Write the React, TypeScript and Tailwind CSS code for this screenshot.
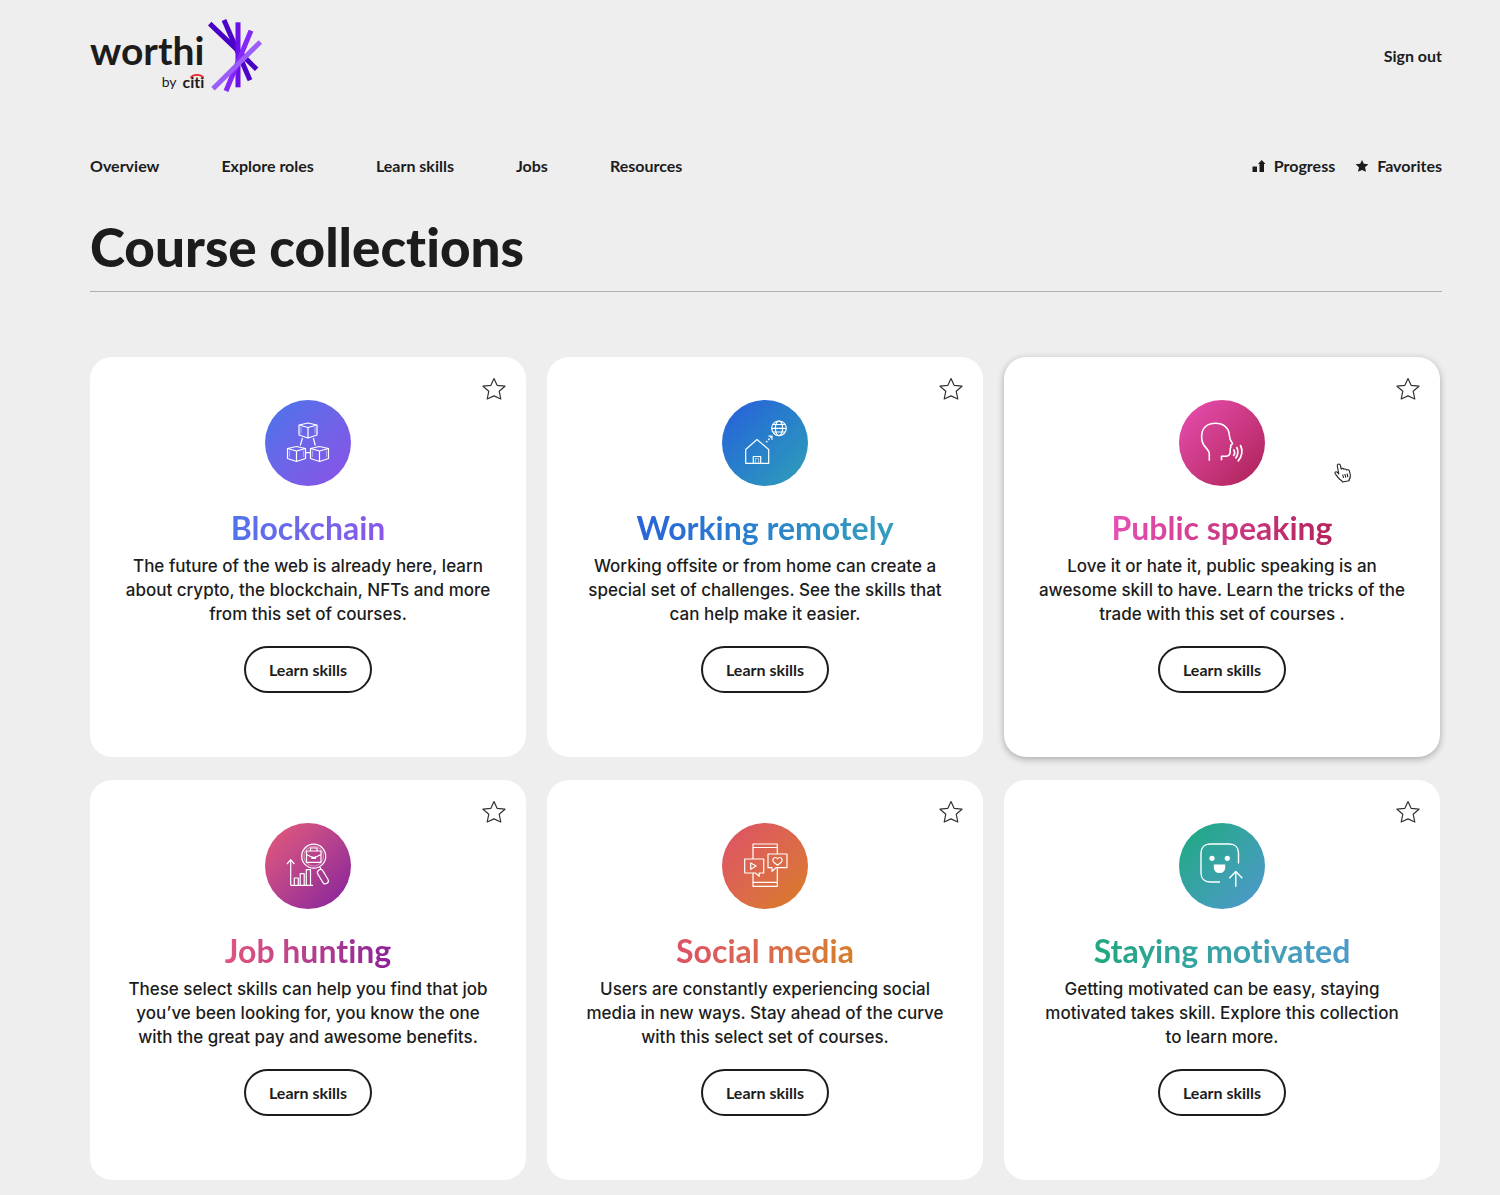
import type { ReactNode } from "react";
import clsx from "clsx";

type Collection = {
  title: string;
  text: string;
  disc: string;
  heading: string;
  icon: ReactNode;
  active?: boolean;
};

const navLinks = ["Overview", "Explore roles", "Learn skills", "Jobs", "Resources"];

const STAR = "M12 1.5 15.1 8.3 23 9.2 17.2 14.2 18.8 22 12 18.9 5.2 22 6.8 14.2 1 9.2 8.9 8.3Z";

function Cube({ x, y }: { x: number; y: number }) {
  return (
    <g transform={`translate(${x} ${y})`}>
      <path d="M0 2.5 9 0.5 18 2.5V12.5L9 15.5 0 12.5ZM0 2.5 9 5 18 2.5M9 5V15.5" />
      <path d="M2 4.5V11M16 4.5V11" strokeOpacity="0.4" />
    </g>
  );
}

const blockchainIcon = (
  <>
    <Cube x={34} y={22.5} />
    <Cube x={22.5} y={46} />
    <Cube x={45.5} y={46} />
    <path d="M37.5 38 35.3 45.5M48.3 38 50.3 45.5M40.7 52.7H45.3" />
  </>
);

const remoteIcon = (
  <>
    <path d="M23.7 63.3V49.5L35 39.5 46.7 49.5V63.3ZM31.3 63.3V56.5H38.7V63.3" />
    <path d="M33.5 63V58.5H36.5V63" strokeOpacity="0.5" />
    <path d="M44 42.3 49.5 36.5" strokeDasharray="2 1.2" />
    <path d="M46.5 36.2H50V39.8" />
    <circle cx="57" cy="28.3" r="7.3" />
    <ellipse cx="57" cy="28.3" rx="3.6" ry="7.3" />
    <path d="M49.7 28.3H64.3M51 24.5H63M51 32H63" />
  </>
);

const speakingIcon = (
  <>
    <path
      d="M30.3 60.7V54C30.3 50 27 48.5 24.8 45 22.8 41.5 22.3 38 22.8 34.5 23.5 27 29 23.2 36.5 23.2 44 23.2 50 27.5 50.3 35 50.4 39 51 40.5 53.5 43.5 53.3 45 51.6 45 51.6 45.6L51.8 47.5 51.2 48.5V52C51 55.5 49 56.3 46.5 56.3H42.5V60.3"
      strokeWidth="1.6"
    />
    <path d="M54.5 49.5C56 51.5 56 54 54.3 56M57.5 47C59.5 50 59.5 55 56.5 58.5M61.3 45C64 50 63.5 56.5 58.8 61.3" strokeWidth="1.7" />
  </>
);

const jobIcon = (
  <>
    <path d="M25.7 62.3V37M22 41 25.7 36.7 29.3 41M25.7 62.3H48" />
    <path d="M29.3 62V55H33.3V62M35.2 62V50.7H39.2V62M41.3 62V46.7H45.5V62" />
    <circle cx="48.7" cy="33.2" r="12" />
    <circle cx="48.7" cy="33.2" r="9.8" strokeOpacity="0.4" />
    <path d="M41.5 28H56V39.3H41.5ZM45.5 28V25H52V28M41.5 31.5 47 34.3H50.5L56 31.5M47 33.3V35.5H50.5V33.3" />
    <rect x="54.8" y="46" width="6" height="15.5" rx="3" transform="rotate(-31 57.8 53.5)" />
    <path d="M54.5 43.5 56.2 46.5" />
  </>
);

const socialIcon = (
  <>
    <path d="M31 36V21H55.3V31M55.3 44.7V63.3H31V50M31 24.5H55.3M31 59.3H55.3" />
    <path d="M22.7 36H41.7V50H37.2V53.3L33.5 50H22.7Z" />
    <path d="M28.7 40V46.2L34.2 43.1Z" />
    <path d="M46 31H65V44.7H54L50 48.3V44.7H46Z" />
    <path d="M55.5 42.2 51.5 39C50 37 51.3 34.5 53.3 34.5 54.5 34.5 55.2 35.3 55.5 35.8 55.8 35.3 56.5 34.5 57.7 34.5 59.7 34.5 61 37 59.5 39Z" />
  </>
);

const motivatedIcon = (
  <>
    <path d="M41 59H31C25.5 59 22 55.5 22 50V30C22 24.5 25.5 21 31 21H50.5C56 21 59.5 24.5 59.5 30V40.5" strokeWidth="1.4" />
    <g fill="#fff" stroke="none">
      <circle cx="33" cy="35.3" r="2.6" />
      <circle cx="48.3" cy="35.3" r="2.6" />
      <path d="M34.8 41.5H46.2V44.2C46.2 47.8 43.8 50 40.5 50 37.2 50 34.8 47.8 34.8 44.2Z" />
    </g>
    <path d="M56.8 63.7V48.8M50.3 55.2 56.8 48.6 63.3 55.2" strokeWidth="1.4" />
  </>
);

const collections: Collection[] = [
  {
    title: "Blockchain",
    text: "The future of the web is already here, learn about crypto, the blockchain, NFTs and more from this set of courses.",
    disc: "from-[#4474ea] to-[#8a50e6]",
    heading: "from-[#4f74ea] to-[#8a55ea]",
    icon: blockchainIcon,
  },
  {
    title: "Working remotely",
    text: "Working offsite or from home can create a special set of challenges. See the skills that can help make it easier.",
    disc: "from-[#2b5bdb] to-[#329fb6]",
    heading: "from-[#2b62d9] to-[#359fbb]",
    icon: remoteIcon,
  },
  {
    title: "Public speaking",
    text: "Love it or hate it, public speaking is an awesome skill to have. Learn the tricks of the trade with this set of courses .",
    disc: "from-[#e94fb3] to-[#ad1f55]",
    heading: "from-[#e64fb4] to-[#b5225c]",
    icon: speakingIcon,
    active: true,
  },
  {
    title: "Job hunting",
    text: "These select skills can help you find that job you’ve been looking for, you know the one with the great pay and awesome benefits.",
    disc: "from-[#e85a76] to-[#861a9c]",
    heading: "from-[#e2557c] to-[#8e2098]",
    icon: jobIcon,
  },
  {
    title: "Social media",
    text: "Users are constantly experiencing social media in new ways. Stay ahead of the curve with this select set of courses.",
    disc: "from-[#de4f66] to-[#d87d1c]",
    heading: "from-[#dc5164] to-[#d87e28]",
    icon: socialIcon,
  },
  {
    title: "Staying motivated",
    text: "Getting motivated can be easy, staying motivated takes skill. Explore this collection to learn more.",
    disc: "from-[#16aa7c] to-[#4f97cf]",
    heading: "from-[#1fa880] to-[#4d9acb]",
    icon: motivatedIcon,
  },
];

function Logo() {
  return (
    <a href="#" aria-label="worthi by citi" className="flex items-start gap-1">
      <span className="flex flex-col items-end pt-2">
        <span className="text-[39px] leading-[47px] font-bold">worthi</span>
        <span className="flex gap-1.5 text-[14px] leading-4">
          by
          <span className="relative text-[16px] font-bold">
            citi
            <svg viewBox="0 0 14 4" className="absolute top-0 right-0 h-1 w-3.5" fill="none" stroke="#e8262c" strokeWidth="1.8">
              <path d="M0.5 3.5C4 0 10 0 13.5 3.5" />
            </svg>
          </span>
        </span>
      </span>
      <svg viewBox="384 27 162 219" className="h-[73px] w-[54px]" fill="none" strokeWidth="15">
        <path d="M389 41 474 122 530 178" stroke="#4a00c4" />
        <path d="M432 30 510 211" stroke="#4d04c9" />
        <path d="M474 37V232" stroke="#6c0fe8" />
        <path d="M513 62 438 243" stroke="#8526fb" />
        <path d="M541 96 399 236" stroke="#9c5df8" />
      </svg>
    </a>
  );
}

function HandCursor() {
  return (
    <svg viewBox="0 0 18 20" className="absolute top-[106px] right-[88px] h-5 w-[18px]" fill="#fff" stroke="#222" strokeWidth="1.1" strokeLinejoin="round">
      <path d="M4 1.3C5 0.7 6 1.2 6.3 2.2L7.2 6C8.2 5 9.5 5.3 9.9 6.3 10.9 5.6 12.2 6 12.5 7 13.8 6.3 15.2 6.9 15.5 8.3L16.3 12C16.7 14 16 15.5 15 16.8L15.2 17.8 8.3 19 7.8 17.8C5 16.5 3 13 1 10.5 0.6 9.2 2 8.3 3.2 9.2L4.8 10.8 3.3 3C3.1 2.2 3.3 1.6 4 1.3Z" />
      <path d="M8.7 11.5 9.5 15M10.9 11 11.7 14.6M13.1 10.6 13.8 14.2" />
    </svg>
  );
}

function CollectionCard({ item }: { item: Collection }) {
  return (
    <article
      className={clsx(
        "relative flex flex-col items-center rounded-[22px] bg-white px-8 pt-[43px] pb-16 text-center",
        item.active && "shadow-[0_2px_7px_rgba(0,0,0,0.3)]",
      )}
    >
      <button aria-label={`Add ${item.title} to favorites`} className="absolute top-5 right-5">
        <svg viewBox="0 0 24 24" className="size-6" fill="none" stroke="#333" strokeWidth="1.2" strokeLinejoin="round">
          <path d={STAR} />
        </svg>
      </button>
      <div className={clsx("size-[86px] rounded-full bg-linear-to-br", item.disc)}>
        <svg viewBox="0 0 86 86" className="size-full" fill="none" stroke="#fff" strokeWidth="1.2" strokeLinejoin="round">
          {item.icon}
        </svg>
      </div>
      <h2 className={clsx("mt-[22px] bg-linear-to-r bg-clip-text text-[32px] leading-10 font-bold text-transparent", item.heading)}>
        {item.title}
      </h2>
      <p className="mt-1.5 font-['Inter',sans-serif] text-[17px] leading-6 font-medium">{item.text}</p>
      <button className="mt-5 h-[47px] w-32 rounded-full border-2 border-[#1c1c1c] text-[16px] font-bold">
        Learn skills
      </button>
      {item.active && <HandCursor />}
    </article>
  );
}

export default function App() {
  return (
    <div className="min-h-screen bg-[#eee] pt-[19px] pr-[58px] pb-3.5 pl-[90px] font-['Lato',sans-serif] text-[#1c1c1c] [font-variant-ligatures:no-common-ligatures]">
      <header>
        <div className="flex items-center justify-between">
          <Logo />
          <a href="#" className="text-[16px] font-bold">Sign out</a>
        </div>
        <nav className="mt-[62px] flex items-center justify-between text-[16px] leading-6 font-bold">
          <div className="flex gap-[62px]">
            {navLinks.map((link) => (
              <a key={link} href="#">{link}</a>
            ))}
          </div>
          <div className="flex gap-5">
            <a href="#" className="flex items-center gap-2">
              <svg viewBox="0 0 14 14" className="size-3.5" fill="#1c1c1c">
                <path d="M0.5 7.5H5V13H0.5ZM7.5 13V5H6L9.7 1 13.5 5H12V13Z" />
              </svg>
              Progress
            </a>
            <a href="#" className="flex items-center gap-2">
              <svg viewBox="0 0 24 24" className="size-3.5" fill="#1c1c1c">
                <path d={STAR} />
              </svg>
              Favorites
            </a>
          </div>
        </nav>
      </header>

      <main>
        <h1 className="mt-[37px] border-b border-[#b0b0b0] pb-3 text-[53px] leading-[64px] font-black">Course collections</h1>
        <div className="mt-[65px] grid grid-cols-3 gap-x-[21px] gap-y-[23px] pr-0.5">
          {collections.map((item) => (
            <CollectionCard key={item.title} item={item} />
          ))}
        </div>
      </main>
    </div>
  );
}
